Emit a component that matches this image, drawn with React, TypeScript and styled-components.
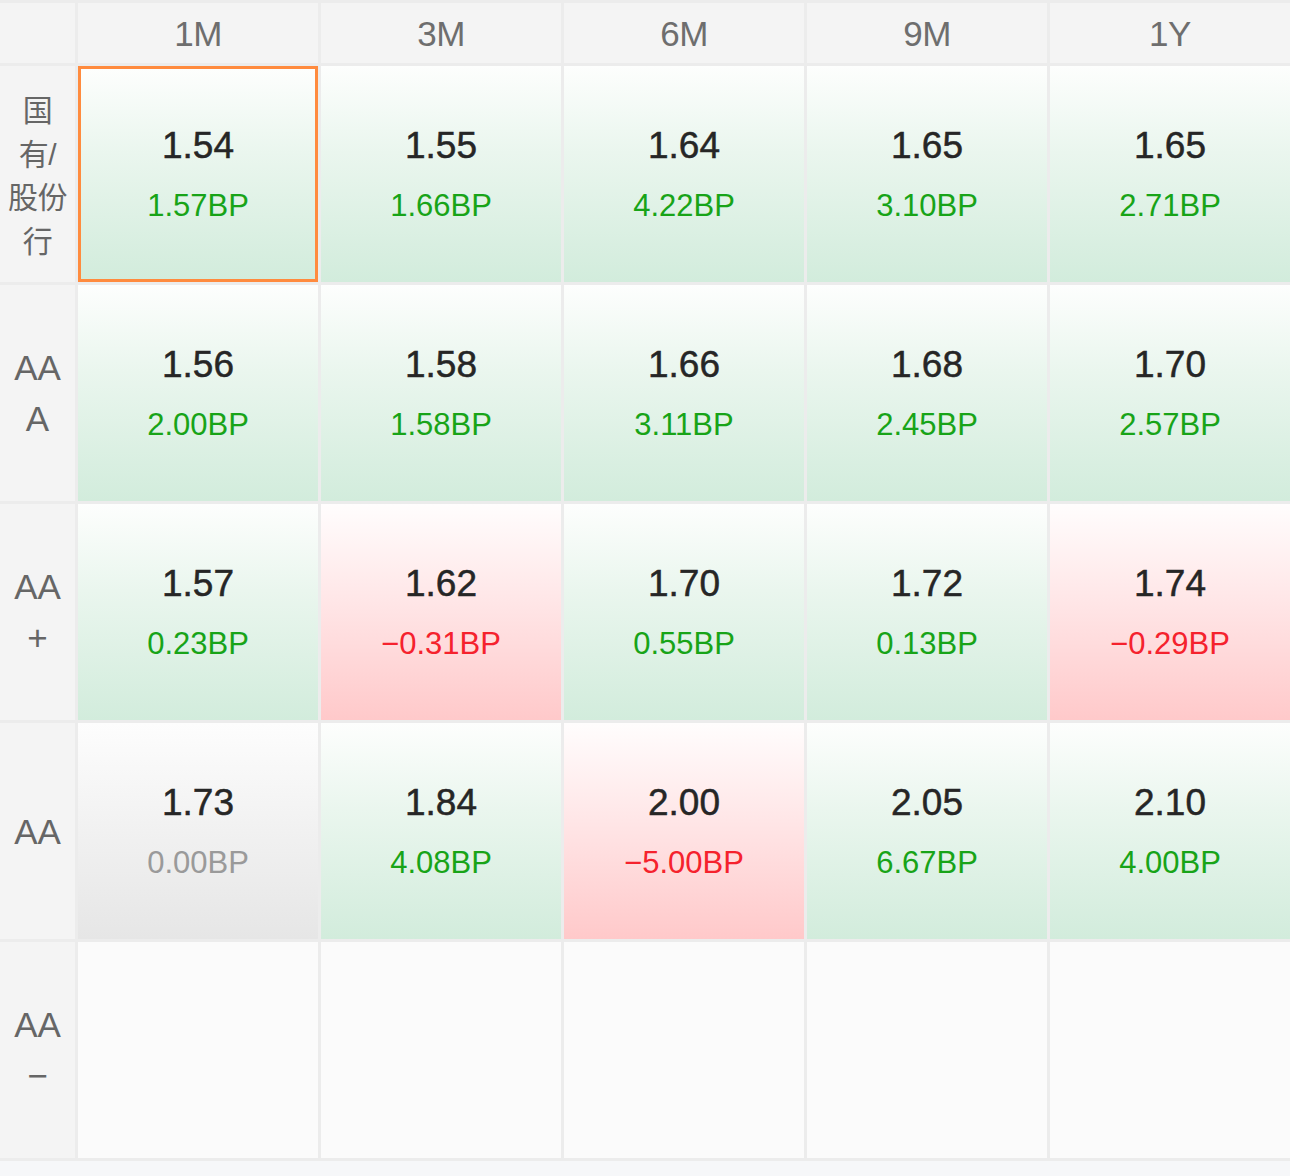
import { Fragment } from 'react';
import styled, { createGlobalStyle, css } from 'styled-components';

const GlobalStyle = createGlobalStyle`
  html, body {
    margin: 0;
    padding: 0;
    background: #f6f7f9;
  }
  body {
    font-family: "Liberation Sans", Arial, "Noto Sans CJK SC", sans-serif;
  }
`;

type Tone = 'up' | 'down' | 'flat' | 'empty';

const COLUMNS = ['1M', '3M', '6M', '9M', '1Y'];

const ROWS: { label: string[]; cells: ([string, string, Tone] | null)[] }[] = [
  {
    label: ['国', '有/', '股份', '行'],
    cells: [
      ['1.54', '1.57BP', 'up'],
      ['1.55', '1.66BP', 'up'],
      ['1.64', '4.22BP', 'up'],
      ['1.65', '3.10BP', 'up'],
      ['1.65', '2.71BP', 'up'],
    ],
  },
  {
    label: ['AA', 'A'],
    cells: [
      ['1.56', '2.00BP', 'up'],
      ['1.58', '1.58BP', 'up'],
      ['1.66', '3.11BP', 'up'],
      ['1.68', '2.45BP', 'up'],
      ['1.70', '2.57BP', 'up'],
    ],
  },
  {
    label: ['AA', '+'],
    cells: [
      ['1.57', '0.23BP', 'up'],
      ['1.62', '\u22120.31BP', 'down'],
      ['1.70', '0.55BP', 'up'],
      ['1.72', '0.13BP', 'up'],
      ['1.74', '\u22120.29BP', 'down'],
    ],
  },
  {
    label: ['AA'],
    cells: [
      ['1.73', '0.00BP', 'flat'],
      ['1.84', '4.08BP', 'up'],
      ['2.00', '\u22125.00BP', 'down'],
      ['2.05', '6.67BP', 'up'],
      ['2.10', '4.00BP', 'up'],
    ],
  },
  {
    label: ['AA', '\u2212'],
    cells: [null, null, null, null, null],
  },
];

const backgrounds: Record<Tone, string> = {
  up: 'linear-gradient(180deg, #fdfefd 0%, #eaf6ee 40%, #d2ecdc 100%)',
  down: 'linear-gradient(180deg, #fffdfd 0%, #ffe6e7 45%, #ffc9ca 100%)',
  flat: 'linear-gradient(180deg, #fdfdfd 0%, #f1f1f1 50%, #e6e6e6 100%)',
  empty: '#fbfbfb',
};

const changeColors: Record<Tone, string> = {
  up: '#18a418',
  down: '#f5222d',
  flat: '#9a9a9a',
  empty: '#9a9a9a',
};

const Grid = styled.div`
  display: grid;
  grid-template-columns: 75px repeat(5, 1fr);
  grid-template-rows: 60px repeat(5, 216px);
  gap: 3px;
  padding: 3px 0;
  background: #ececec;
  width: 1290px;
`;

const HeaderCell = styled.div`
  background: #f4f4f4;
  display: flex;
  align-items: center;
  justify-content: center;
  color: #6e6e6e;
  font-size: 35px;
  letter-spacing: -0.5px;
  padding-top: 2px;
`;

const LabelCell = styled.div`
  background: #f4f4f4;
  display: flex;
  flex-direction: column;
  align-items: center;
  justify-content: center;
  color: #666;
  font-size: 35px;
  line-height: 51px;
  font-family: "Liberation Sans", "Noto Sans CJK SC", sans-serif;
`;

const LabelLine = styled.span<{ $cjk: boolean }>`
  ${(p) =>
    p.$cjk &&
    css`
      font-size: 30px;
      line-height: 43.5px;
      letter-spacing: -0.5px;
      position: relative;
      top: 2px;
    `}
`;

const Cell = styled.div<{ $tone: Tone; $selected?: boolean }>`
  background: ${(p) => backgrounds[p.$tone]};
  display: flex;
  flex-direction: column;
  align-items: center;
  justify-content: center;
  gap: 21px;
  box-sizing: border-box;
  ${(p) =>
    p.$selected &&
    css`
      border: 3px solid #ff8b3e;
    `}
`;

const Value = styled.div`
  font-size: 37px;
  line-height: 42px;
  color: #262626;
  -webkit-text-stroke: 0.5px #262626;
`;

const Change = styled.div<{ $tone: Tone }>`
  font-size: 31px;
  line-height: 36px;
  color: ${(p) => changeColors[p.$tone]};
`;

export default function App() {
  return (
    <>
      <GlobalStyle />
      <Grid>
        <HeaderCell />
        {COLUMNS.map((c) => (
          <HeaderCell key={c}>{c}</HeaderCell>
        ))}
        {ROWS.map((row, ri) => (
          <Fragment key={ri}>
            <LabelCell>
              {row.label.map((line, i) => (
                <LabelLine key={i} $cjk={/[\u4e00-\u9fff]/.test(line)}>
                  {line}
                </LabelLine>
              ))}
            </LabelCell>
            {row.cells.map((cell, ci) =>
              cell ? (
                <Cell key={ci} $tone={cell[2]} $selected={ri === 0 && ci === 0}>
                  <Value>{cell[0]}</Value>
                  <Change $tone={cell[2]}>{cell[1]}</Change>
                </Cell>
              ) : (
                <Cell key={ci} $tone="empty" />
              ),
            )}
          </Fragment>
        ))}
      </Grid>
    </>
  );
}
